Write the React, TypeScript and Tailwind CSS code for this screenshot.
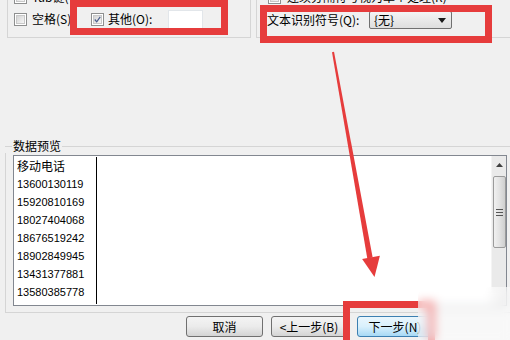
import React from "react";

const phones = [
  "13600130119",
  "15920810169",
  "18027404068",
  "18676519242",
  "18902849945",
  "13431377881",
  "13580385778",
];

const CheckBox = ({ checked }: { checked?: boolean }) => (
  <span className="w-[13px] h-[13px] shrink-0 border border-[#8e8f8f] p-px bg-white">
    <span className="w-full h-full flex items-center justify-center border border-[#c8c8c8] bg-linear-to-br from-[#d4d4d4] to-[#f6f6f6]">
      {checked ? (
        <svg width="9" height="9" viewBox="0 0 9 9">
          <path d="M1 4.5 L3.5 7.5 L8 1" fill="none" stroke="#4a5d8c" strokeWidth="1.6" />
        </svg>
      ) : null}
    </span>
  </span>
);

const WinButton = ({ label, primary, w }: { label: string; primary?: boolean; w: string }) => (
  <button
    className={
      primary
        ? `${w} h-[21px] rounded-[3px] border border-[#3c7fb1] bg-linear-to-b from-[#eaf6fd] via-[#d9f0fc] to-[#a7d9f5] text-[12px] leading-none`
        : `${w} h-[21px] rounded-[3px] border border-[#707070] bg-linear-to-b from-[#f4f4f4] via-[#ebebeb] to-[#d4d4d4] text-[12px] leading-none`
    }
  >
    {label}
  </button>
);

export default function App() {
  return (
    <div className="w-[510px] h-[340px] relative overflow-hidden bg-[#f0f0f0] text-black text-[12px] font-['Noto_Sans_CJK_SC',sans-serif]">
      {/* top options */}
      <div className="h-[38px] flex">
        <div className="ml-[7px] w-[244px] h-full border-x border-b border-[#d5d5d5] overflow-visible">
          <div className="-mt-[14px] flex flex-col">
            <div className="h-[22px] flex items-center pl-[6px]">
              <CheckBox />
              <span className="ml-[5px]">Tab键(T)</span>
            </div>
            <div className="h-[22px] flex items-center pl-[6px]">
              <div className="w-[77px] flex items-center">
                <CheckBox />
                <span className="ml-[5px]">空格(S)</span>
              </div>
              <CheckBox checked />
              <span className="ml-[4px] w-[60px]">其他(O):</span>
              <div className="w-[35px] h-[19px] bg-white border border-[#e2e6ea]" />
            </div>
          </div>
        </div>
        <div className="ml-[5px] flex-1 h-full border-l border-b border-[#d5d5d5]">
          <div className="-mt-[14px] flex flex-col">
            <div className="h-[22px] flex items-center pl-[11px]">
              <CheckBox />
              <span className="ml-[6px] whitespace-nowrap">连续分隔符号视为单个处理(R)</span>
            </div>
            <div className="h-[22px] flex items-center pl-[10px] pt-[2px]">
              <span className="w-[102px] whitespace-nowrap">文本识别符号(Q):</span>
              <div className="w-[83px] h-[18px] rounded-[2px] border border-[#707070] bg-linear-to-b from-[#f4f4f4] to-[#dedede] flex items-center justify-between pl-[4px] pr-[5px]">
                <span>{"{无}"}</span>
                <svg width="8" height="5" viewBox="0 0 8 5">
                  <path d="M0 0 H8 L4 5 Z" fill="#1a1a1a" />
                </svg>
              </div>
            </div>
          </div>
        </div>
      </div>

      {/* data preview group */}
      <div className="mt-[101px] ml-[5px] w-[520px]">
        <div className="h-[14px] flex items-center">
          <div className="w-[7px] h-px bg-[#d5d5d5]" />
          <span className="px-px leading-none text-[12px]">数据预览</span>
          <div className="flex-1 h-px bg-[#d5d5d5]" />
        </div>
        <div className="border-l border-b border-[#d5d5d5] pt-[2px] pb-[6px] pl-[7px]">
          <div className="w-[494px] h-[151px] border border-[#828790] bg-white flex">
            <div className="w-[82px] pt-px flex flex-col">
              <div className="h-[18px] pl-[3px] flex items-center text-[12px]">移动电话</div>
              {phones.map((p) => (
                <div key={p} className="h-[18px] pl-[3px] flex items-center font-['Liberation_Sans',sans-serif] text-[11px]">
                  {p}
                </div>
              ))}
            </div>
            <div className="w-px bg-black my-px" />
            <div className="flex-1" />
            <div className="w-[15px] bg-[#eaeaea] border-l border-[#f4f4f4] flex flex-col items-center">
              <div className="h-[18px] flex items-center justify-center">
                <svg width="7" height="4" viewBox="0 0 7 4">
                  <path d="M0 4 L3.5 0 L7 4 Z" fill="#404040" />
                </svg>
              </div>
              <div className="mt-[2px] w-[13px] h-[72px] rounded-[2px] border border-[#9b9b9b] bg-linear-to-r from-[#f0f0f0] via-[#e2e2e2] to-[#cfcfcf] flex flex-col items-center justify-center gap-[2px]">
                <div className="w-[7px] h-px bg-[#555]" />
                <div className="w-[7px] h-px bg-[#555]" />
                <div className="w-[7px] h-px bg-[#555]" />
              </div>
            </div>
          </div>
        </div>
      </div>

      {/* buttons */}
      <div className="mt-[3px] flex pl-[186px]">
        <WinButton label="取消" w="w-[77px]" />
        <div className="w-[8px]" />
        <WinButton label="<上一步(B)" w="w-[76px]" />
        <div className="w-[10px]" />
        <WinButton label="下一步(N)" primary w="w-[76px]" />
      </div>

      {/* red annotations */}
      <div className="absolute left-[70px] top-0 w-[158px] h-[35px] border-[7px] border-[#e63c3c]" />
      <div className="absolute left-[260px] top-[5px] w-[232px] h-[38px] border-[7px] border-[#e63c3c]" />
      <div className="absolute left-[343px] top-[301px] w-[92px] h-[46px] border-[7px] border-[#e63c3c]" />
      <svg className="absolute left-0 top-0 pointer-events-none" width="510" height="340" viewBox="0 0 510 340">
        <polygon points="334,51.8 332,52.2 367.3,258.5 372.7,257.5" fill="#e63c3c" />
        <polygon points="374.5,277 362.1,258.9 379.9,255.7" fill="#e63c3c" />
      </svg>

      {/* watermark blur */}
      <div className="absolute left-[418px] top-[287px] w-[100px] h-[60px] backdrop-blur-[5px] bg-white/55 rounded-tl-[10px]" />
    </div>
  );
}
